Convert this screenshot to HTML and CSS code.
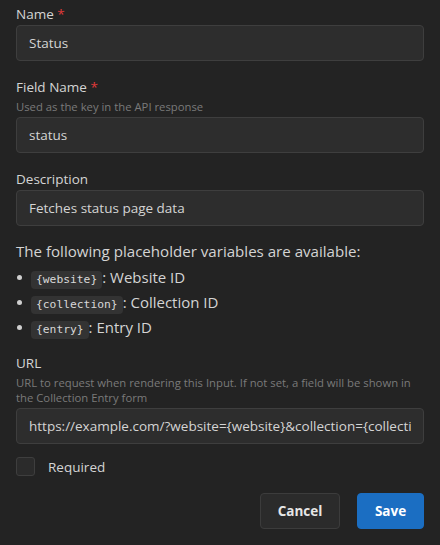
FILE: index.html
```html
<!DOCTYPE html>
<html>
<head>
<meta charset="utf-8">
<link rel="stylesheet" href="styles.css">
</head>
<body>
<form class="form">
  <div class="field">
    <label class="label">Name <span class="req">*</span></label>
    <input class="input" type="text" value="Status">
  </div>
  <div class="field">
    <label class="label">Field Name <span class="req">*</span></label>
    <div class="help">Used as the key in the API response</div>
    <input class="input" type="text" value="status">
  </div>
  <div class="field">
    <label class="label">Description</label>
    <input class="input" type="text" value="Fetches status page data">
  </div>
  <div class="vars">
    <p class="vars-title">The following placeholder variables are available:</p>
    <ul class="vars-list">
      <li><code class="code">{website}</code>: Website ID</li>
      <li><code class="code">{collection}</code>: Collection ID</li>
      <li><code class="code">{entry}</code>: Entry ID</li>
    </ul>
  </div>
  <div class="field">
    <label class="label">URL</label>
    <div class="help">URL to request when rendering this Input. If not set, a field will be shown in the Collection Entry form</div>
    <input class="input" type="text" value="https://example.com/?website={website}&amp;collection={collection}&amp;entry={entry}">
  </div>
  <label class="check">
    <span class="box"></span>
    <span class="check-text">Required</span>
  </label>
  <div class="actions">
    <button type="button" class="btn btn-cancel">Cancel</button>
    <button type="button" class="btn btn-save">Save</button>
  </div>
</form>
</body>
</html>
```

FILE: styles.css
```css
html, body {
  margin: 0;
  padding: 0;
  background: #232323;
}
body {
  font-family: "Open Sans", "Noto Sans", sans-serif;
  color: #d2d2d2;
  width: 440px;
  height: 545px;
  overflow: hidden;
}
.form {
  padding: 4px 16px 0 16px;
  display: flex;
  flex-direction: column;
}
.field {
  display: flex;
  flex-direction: column;
  margin-bottom: 16px;
}
.label {
  font-size: 13.5px;
  line-height: 20px;
  color: #d4d4d4;
  margin-bottom: 1px;
}
.req {
  color: #e03a3a;
}
.help {
  font-size: 11.3px;
  line-height: 15px;
  color: #7a7a7a;
  margin-top: 1px;
  margin-bottom: 3px;
  padding-right: 6px;
}
.input {
  box-sizing: border-box;
  height: 36px;
  width: 100%;
  background: #2d2d2d;
  border: 1px solid #3e3e3e;
  border-radius: 4px;
  color: #d4d4d4;
  font-family: inherit;
  font-size: 13.5px;
  padding: 0 12px;
  outline: none;
}
.vars {
  margin-top: -2px;
  margin-bottom: 13px;
}
.vars-title {
  margin: 0 0 3px 0;
  font-size: 15.1px;
  line-height: 22px;
  color: #d4d4d4;
}
.vars-list {
  list-style: none;
  margin: 0;
  padding: 0;
}
.vars-list li {
  position: relative;
  padding-left: 15px;
  font-size: 15px;
  line-height: 25px;
  height: 25px;
  color: #d4d4d4;
}
.vars-list li::before {
  content: "";
  position: absolute;
  left: 1px;
  top: 10px;
  width: 5px;
  height: 5px;
  border-radius: 50%;
  background: #cfcfcf;
}
.code {
  display: inline-block;
  font-family: "DejaVu Sans Mono", "Liberation Mono", monospace;
  font-size: 11.3px;
  line-height: 18px;
  background: #333333;
  border-radius: 4px;
  padding: 0 5px;
  color: #d8d8d8;
}
.check {
  display: flex;
  align-items: center;
  gap: 13px;
  margin-top: -3px;
}
.box {
  box-sizing: border-box;
  width: 19px;
  height: 19px;
  border: 1px solid #3e3e3e;
  background: #2b2b2b;
  border-radius: 3px;
}
.check-text {
  font-size: 13.5px;
  color: #d4d4d4;
}
.actions {
  display: flex;
  justify-content: flex-end;
  gap: 17px;
  margin-top: 17px;
}
.btn {
  height: 36px;
  border-radius: 4px;
  font-family: inherit;
  font-size: 13.5px;
  font-weight: 700;
  padding: 0;
}
.btn-cancel {
  width: 80px;
  background: #2b2b2b;
  border: 1px solid #3c3c3c;
  color: #e6e6e6;
}
.btn-save {
  width: 67px;
  background: #1b6ec2;
  border: 1px solid #1b6ec2;
  color: #ffffff;
}
```
